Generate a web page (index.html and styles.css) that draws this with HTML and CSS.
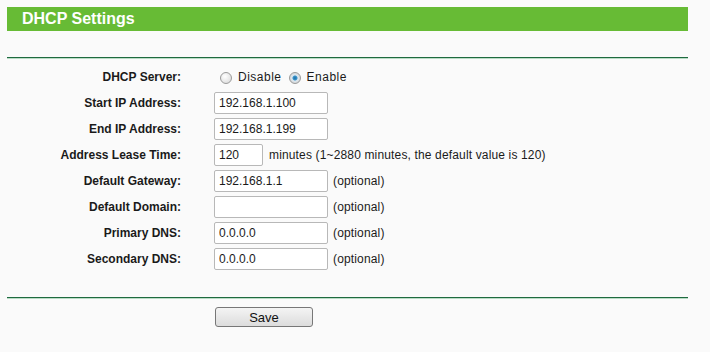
FILE: index.html
```html
<!DOCTYPE html>
<html>
<head>
  <title>DHCP Settings</title>
  <link rel="stylesheet" href="styles.css">
</head>
<body>
  <div class="page">
    <div class="titulo">DHCP Settings</div>
    <div class="linea linea-top"></div>

    <form class="dhcp-form">
      <label class="etiqueta">DHCP Server:</label>
      <div class="valor">
        <label class="radio"><input type="radio" name="server"> Disable</label>
        <label class="radio"><input type="radio" name="server" checked> Enable</label>
      </div>

      <label class="etiqueta">Start IP Address:</label>
      <div class="valor"><input type="text" class="campo" value="192.168.1.100"></div>

      <label class="etiqueta">End IP Address:</label>
      <div class="valor"><input type="text" class="campo" value="192.168.1.199"></div>

      <label class="etiqueta">Address Lease Time:</label>
      <div class="valor"><input type="text" class="campo corto" value="120"> <span class="nota">minutes (1~2880 minutes, the default value is 120)</span></div>

      <label class="etiqueta">Default Gateway:</label>
      <div class="valor"><input type="text" class="campo" value="192.168.1.1"> <span class="nota">(optional)</span></div>

      <label class="etiqueta">Default Domain:</label>
      <div class="valor"><input type="text" class="campo" value=""> <span class="nota">(optional)</span></div>

      <label class="etiqueta">Primary DNS:</label>
      <div class="valor"><input type="text" class="campo" value="0.0.0.0"> <span class="nota">(optional)</span></div>

      <label class="etiqueta">Secondary DNS:</label>
      <div class="valor"><input type="text" class="campo" value="0.0.0.0"> <span class="nota">(optional)</span></div>
    </form>

    <div class="linea linea-bottom"></div>

    <div class="acciones">
      <button type="button" class="boton">Save</button>
    </div>
  </div>
</body>
</html>
```

FILE: styles.css
```css
body {
  margin: 0;
  background-color: #fafafa;
  font-family: "Liberation Sans", Arial, sans-serif;
  font-size: 12px;
  color: #1a1a1a;
}

.page {
  width: 681px;
  padding: 7px;
}

.titulo {
  height: 24px;
  line-height: 24px;
  background-color: #67bb35;
  color: #ffffff;
  font-size: 16px;
  font-weight: bold;
  padding-left: 15px;
}

.linea {
  height: 1px;
  background-color: #1f6a3f;
  border-bottom: 1px solid #b9dcc6;
}

.linea-top {
  margin-top: 26px;
}

.dhcp-form {
  display: grid;
  grid-template-columns: 174px 1fr;
  grid-template-rows: 27px;
  grid-auto-rows: 26px;
  column-gap: 33px;
  margin: 4px 0 0 0;
}

.etiqueta {
  font-weight: bold;
  text-align: right;
  align-self: center;
}

.valor {
  display: flex;
  align-items: center;
  gap: 5px;
}

.radio {
  display: flex;
  align-items: center;
  gap: 6px;
  margin-right: 2px;
  margin-left: 6px;
  letter-spacing: 0.5px;
}

.radio + .radio {
  margin-left: 0;
}

.radio input {
  appearance: none;
  -webkit-appearance: none;
  width: 12px;
  height: 12px;
  margin: 2px 0 0 0;
  border: 1px solid #9a9a9a;
  border-radius: 50%;
  background: radial-gradient(circle at 40% 35%, #ffffff, #d6d6d6);
}

.radio input:checked {
  background: radial-gradient(circle, #1d6fa8 0, #3a93c9 2px, #dfe8ef 3px, #cfcfcf 6px);
}

.campo {
  width: 104px;
  height: 16px;
  margin: 0;
  padding: 2px 4px;
  border: 1px solid #b8b8b8;
  border-radius: 2px;
  background-color: #ffffff;
  font-family: "Liberation Sans", Arial, sans-serif;
  font-size: 12px;
  color: #1a1a1a;
  box-sizing: content-box;
}

.campo.corto {
  width: 39px;
}

.campo.corto + .nota {
  margin-left: 1px;
}

.nota {
  letter-spacing: 0.15px;
}

.linea-bottom {
  margin-top: 25px;
}

.acciones {
  padding: 8px 0 0 208px;
}

.boton {
  width: 98px;
  height: 20px;
  padding: 0;
  border: 1px solid #777777;
  border-radius: 3px;
  background: linear-gradient(#f4f4f4, #dcdcdc);
  font-family: "Liberation Sans", Arial, sans-serif;
  font-size: 13px;
  color: #111111;
}
```
